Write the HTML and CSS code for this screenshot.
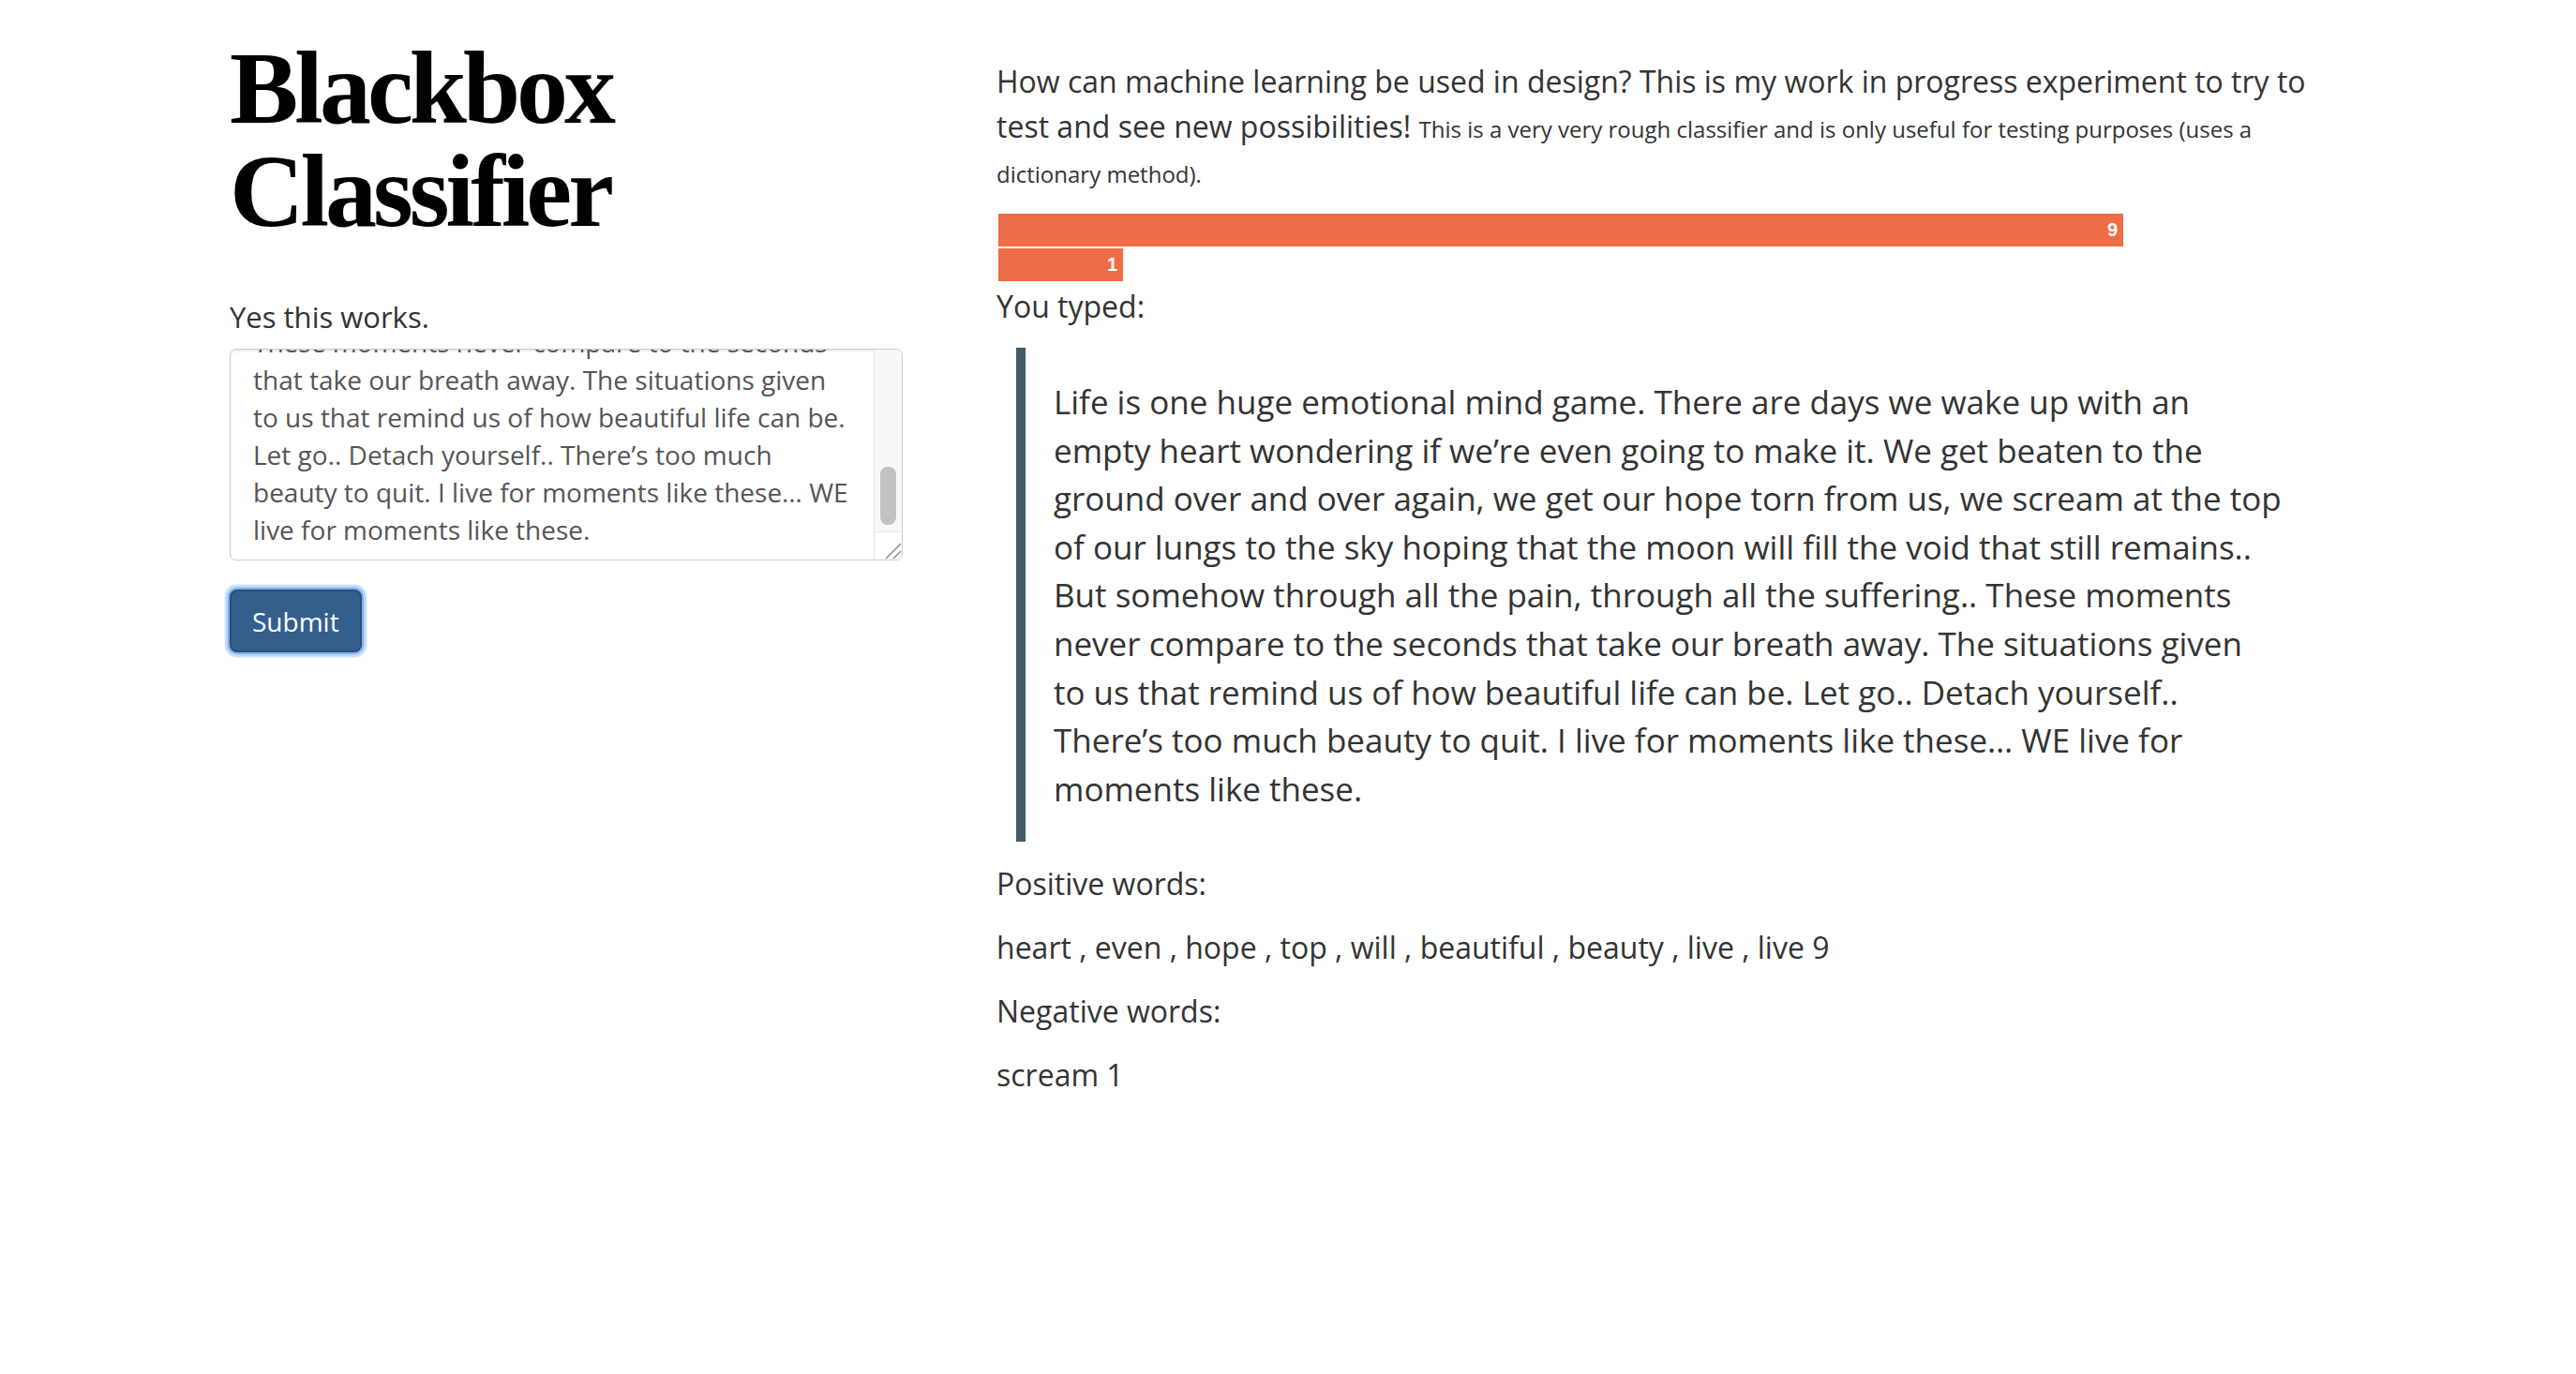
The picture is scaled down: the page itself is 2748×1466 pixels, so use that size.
FILE: index.html
```html
<!DOCTYPE html>
<html lang="en">
<head>
<meta charset="utf-8">
<title>Blackbox Classifier</title>
<link rel="stylesheet" href="styles.css">
</head>
<body>
<div class="page">
  <div class="side">
    <h1 class="title">Blackbox<br>Classifier</h1>
    <form class="form">
      <label class="label" for="msg">Yes this works.</label>
      <div class="field">
        <textarea id="msg" class="input">Life is one huge emotional mind game. There are days we wake up with an empty heart wondering if we’re even going to make it. We get beaten to the ground over and over again, we get our hope torn from us, we scream at the top of our lungs to the sky hoping that the moon will fill the void that still remains.. But somehow through all the pain, through all the suffering.. These moments never compare to the seconds that take our breath away. The situations given to us that remind us of how beautiful life can be. Let go.. Detach yourself.. There’s too much beauty to quit. I live for moments like these… WE live for moments like these.</textarea>
        <div class="scrollbar">
          <div class="track"><div class="thumb"></div></div>
          <div class="grip">
            <svg width="29" height="29" viewBox="0 0 29 29"><path d="M12 28 L28 12 M20 28 L28 20" stroke="#8c8c8c" stroke-width="1.5" fill="none"/></svg>
          </div>
        </div>
      </div>
      <button class="submit" type="button">Submit</button>
    </form>
  </div>
  <div class="main">
    <p class="intro">How can machine learning be used in design? This is my work in progress experiment to try to test and see new possibilities! <small class="note">This is a very very rough classifier and is only useful for testing purposes (uses a dictionary method).</small></p>
    <div class="chart">
      <div class="bar" style="width:1200px">9</div>
      <div class="bar" style="width:133px">1</div>
    </div>
    <p class="text typed">You typed:</p>
    <blockquote class="quote">Life is one huge emotional mind game. There are days we wake up with an empty heart wondering if we’re even going to make it. We get beaten to the ground over and over again, we get our hope torn from us, we scream at the top of our lungs to the sky hoping that the moon will fill the void that still remains.. But somehow through all the pain, through all the suffering.. These moments never compare to the seconds that take our breath away. The situations given to&nbsp;us that remind us of how beautiful life can be. Let go.. Detach yourself.. There’s too much beauty to quit. I live for moments like these… WE live for moments like these.</blockquote>
    <p class="text">Positive words:</p>
    <p class="text">heart , even , hope , top , will , beautiful , beauty , live , live 9</p>
    <p class="text">Negative words:</p>
    <p class="text">scream 1</p>
  </div>
</div>
<script src="script.js"></script>
</body>
</html>
```

FILE: styles.css
```css
html, body {
  margin: 0;
  background: #fff;
}

body {
  font-family: "Open Sans", "Liberation Sans", sans-serif;
  font-size: 32px;
  line-height: 1.5;
  color: #333;
}

.page {
  display: flex;
  gap: 100px;
  padding-left: 245px;
}

.side {
  flex: none;
  width: 718px;
}

.main {
  flex: none;
  width: 1417px;
  padding-top: 63px;
}

.title {
  margin: 39px 0 55px;
  font-family: "Liberation Serif", "Times New Roman", serif;
  font-weight: 700;
  font-size: 110px;
  line-height: 110px;
  letter-spacing: -4px;
  color: #000;
}

.form {
  margin: 0;
}

.label {
  display: block;
  font-size: 31px;
  line-height: 48px;
  margin-bottom: 10px;
  color: #333;
}

.field {
  display: flex;
  box-sizing: border-box;
  width: 718px;
  height: 226px;
  margin: 0 0 31px;
  border: 1px solid #cbcbcb;
  border-radius: 7px;
  overflow: hidden;
  background: #fff;
  box-shadow: inset 0 2px 2px rgba(0, 0, 0, 0.075);
}

.input {
  flex: 1;
  min-width: 0;
  height: 100%;
  box-sizing: border-box;
  margin: 0;
  padding: 12px 24px;
  border: 0;
  outline: none;
  resize: none;
  overflow: hidden;
  background: transparent;
  font-family: "Open Sans", "Liberation Sans", sans-serif;
  font-size: 28px;
  line-height: 40px;
  color: #555;
}

.scrollbar {
  flex: none;
  width: 29px;
  display: flex;
  flex-direction: column;
  border-left: 1px solid #e4e4e4;
}

.track {
  flex: 1;
  display: flex;
  flex-direction: column;
  justify-content: flex-end;
  padding: 7px 6px 7px 6px;
  background: #f8f8f8;
}

.thumb {
  height: 62px;
  border-radius: 8px;
  background: #c2c2c2;
}

.grip {
  flex: none;
  height: 29px;
  border-top: 1px solid #e4e4e4;
  background: #fff;
}

.grip svg {
  display: block;
}

.submit {
  display: block;
  box-sizing: border-box;
  height: 67px;
  padding: 0 22px;
  border: 2px solid #2b5079;
  border-radius: 8px;
  background: #345f8d;
  color: #fff;
  font-family: "Open Sans", "Liberation Sans", sans-serif;
  font-size: 28px;
  line-height: 40px;
  box-shadow: 0 0 0 2px #7fb0ec, 0 0 2px 5px rgba(140, 188, 244, 0.6);
}

.intro {
  margin: 0 0 21px;
}

.note {
  font-size: 24px;
}

.chart {
  margin: 0;
}

.bar {
  box-sizing: border-box;
  margin: 2px;
  padding: 6px;
  background: #ee6d46;
  color: #fff;
  text-align: right;
  font: 700 20px "Liberation Sans", Arial, sans-serif;
}

.text {
  margin: 0 0 20px;
}

.typed {
  margin-top: 3px;
}

.quote {
  margin: 0 14px 21px 21px;
  padding: 32px 30px 31px;
  border-left: 10px solid #435a69;
  font-size: 35px;
  line-height: 51.6px;
  color: #333;
}
```

FILE: script.js
```js
var box = document.querySelector('.input');
box.scrollTop = box.scrollHeight;
```
